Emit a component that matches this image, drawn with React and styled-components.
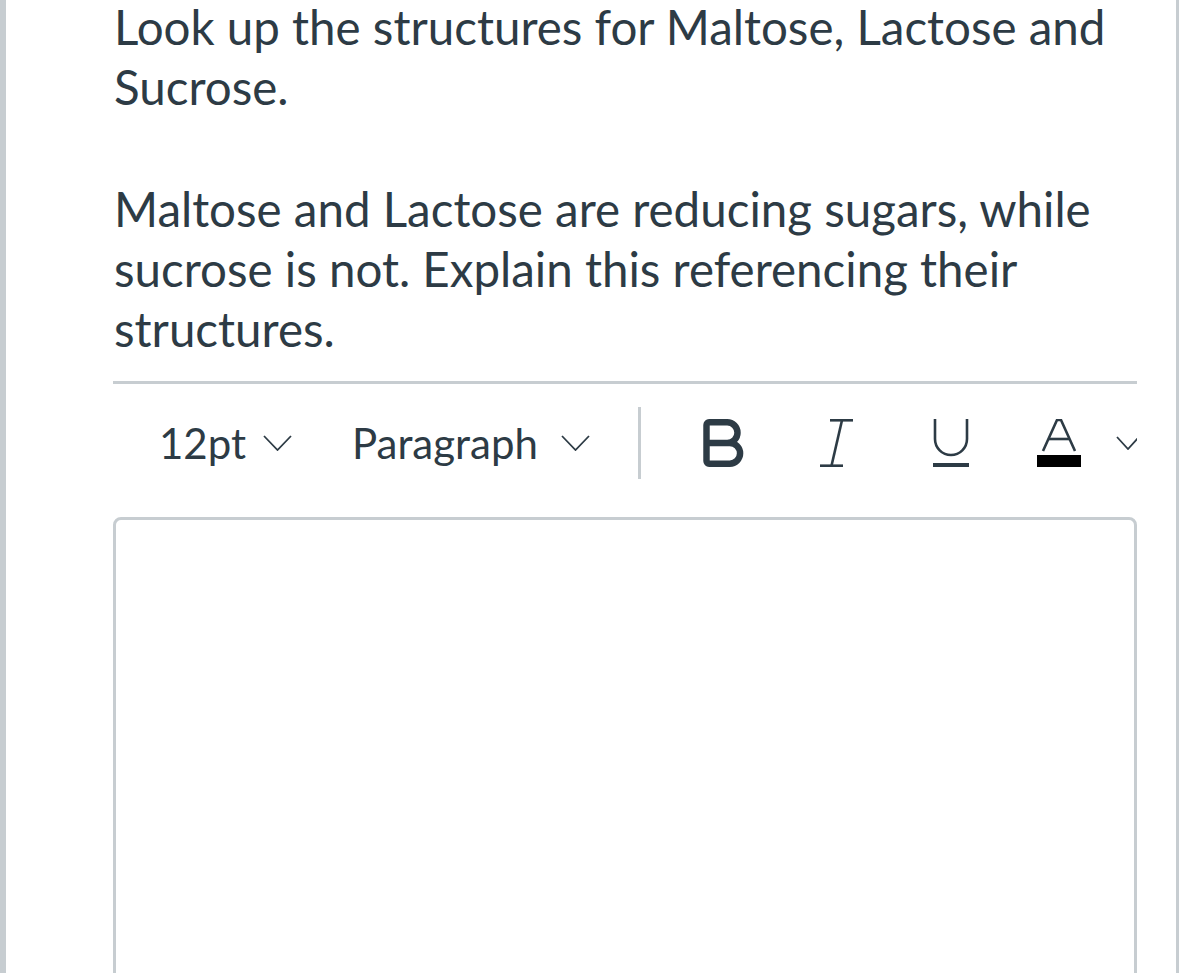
import React from "react";
import styled, { createGlobalStyle } from "styled-components";
import { Bold } from "lucide-react";

const Global = createGlobalStyle`
  html, body { margin: 0; padding: 0; background: #ffffff; }
  body { font-family: Lato, "Open Sans", sans-serif; color: #2d3b45; overflow: hidden; }
`;

const Page = styled.div`
  box-sizing: border-box;
  width: 1179px;
  height: 973px;
  overflow: hidden;
  border-left: 6px solid #c7cdd1;
  border-right: 3px solid #c7cdd1;
  background: #fff;
  display: flex;
`;

const Main = styled.main`
  box-sizing: border-box;
  flex: 1;
  min-width: 0;
  padding: 0 39px 0 107px;
  display: flex;
  flex-direction: column;
  & > * { flex-shrink: 0; }
`;

const Question = styled.div`
  margin-top: -3px;
  padding-left: 1px;
`;

const Para = styled.p`
  margin: 0 0 62px;
  font-size: 47.5px;
  line-height: 60px;
  font-weight: 400;
  color: #2d3b45;
  &:last-child { margin-bottom: 0; }
`;

const Rule = styled.hr`
  margin: 22px 0 0;
  border: 0;
  border-top: 3px solid #c7cdd1;
  height: 0;
`;

const Toolbar = styled.div`
  display: flex;
  align-items: center;
  height: 133px;
  padding: 0 0 15px 46px;
  box-sizing: border-box;
  overflow: hidden;
  white-space: nowrap;
`;

const Dropdown = styled.button`
  flex: none;
  width: ${(p) => p.$w}px;
  display: flex;
  align-items: center;
  justify-content: space-between;
  margin-right: ${(p) => p.$after}px;
  background: none;
  border: 0;
  padding: 0;
  font-family: Lato, "Open Sans", sans-serif;
  font-size: 42px;
  color: #2d3b45;
  line-height: 1;
`;

const Divider = styled.span`
  width: 3px;
  height: 72px;
  background: #c7cdd1;
  flex: none;
`;

const IconButton = styled.button`
  flex: none;
  width: ${(p) => p.$w}px;
  display: flex;
  align-items: center;
  justify-content: ${(p) => (p.$start ? "flex-start" : "center")};
  gap: ${(p) => p.$gap || 0}px;
  padding: 0 0 0 ${(p) => p.$pad || 0}px;
  background: none;
  border: 0;
  color: #2d3b45;
  height: 60px;
`;

const Editor = styled.div`
  box-sizing: border-box;
  height: 520px;
  border: 3px solid #c7cdd1;
  border-radius: 8px;
  background: #fff;
`;

const Chevron = ({ w = 29, h = 16 }) => (
  <svg width={w} height={h} viewBox={`0 0 ${w} ${h}`} fill="none">
    <polyline
      points={`1,1 ${w / 2},${h - 1} ${w - 1},1`}
      stroke="#2d3b45"
      strokeWidth="1.8"
      strokeLinejoin="miter"
    />
  </svg>
);

const ItalicIcon = () => (
  <svg width="34" height="48" viewBox="0 0 34 48" fill="none" stroke="#2d3b45" strokeWidth="2.6">
    <line x1="10" y1="1.3" x2="33" y2="1.3" />
    <line x1="0" y1="46.7" x2="23" y2="46.7" />
    <line x1="22" y1="1.3" x2="11.5" y2="46.7" />
  </svg>
);

const UnderlineIcon = () => (
  <svg width="38" height="48" viewBox="0 0 38 48" fill="none" stroke="#2d3b45">
    <path d="M3 0 V20 A16 16 0 0 0 35 20 V0" strokeWidth="2.6" />
    <line x1="1" y1="46" x2="37" y2="46" strokeWidth="4" />
  </svg>
);

const ColorIcon = () => (
  <svg width="44" height="48" viewBox="0 0 44 48" fill="none">
    <path d="M6 32 L20 1 H24 L38 32" stroke="#2d3b45" strokeWidth="2.6" strokeLinejoin="miter" />
    <line x1="12" y1="20" x2="32" y2="20" stroke="#2d3b45" strokeWidth="2.6" />
    <rect x="0" y="36" width="44" height="12" fill="#000" />
  </svg>
);

export default function App() {
  return (
    <>
      <Global />
      <Page>
        <Main>
          <Question>
            <Para>Look up the structures for Maltose, Lactose and Sucrose.</Para>
            <Para>
              Maltose and Lactose are reducing sugars, while sucrose is not. Explain this
              referencing their structures.
            </Para>
          </Question>
          <Rule />
          <Toolbar>
            <Dropdown $w={133} $after={60}>
              <span>12pt</span>
              <Chevron />
            </Dropdown>
            <Dropdown $w={238} $after={48}>
              <span>Paragraph</span>
              <Chevron />
            </Dropdown>
            <Divider />
            <IconButton $w={162}>
              <Bold size={62} strokeWidth={2.5} />
            </IconButton>
            <IconButton $w={68}>
              <ItalicIcon />
            </IconButton>
            <IconButton $w={160}>
              <UnderlineIcon />
            </IconButton>
            <IconButton $w={120} $start $pad={6} $gap={35}>
              <ColorIcon />
              <Chevron w={24} h={14} />
            </IconButton>
          </Toolbar>
          <Editor />
        </Main>
      </Page>
    </>
  );
}
